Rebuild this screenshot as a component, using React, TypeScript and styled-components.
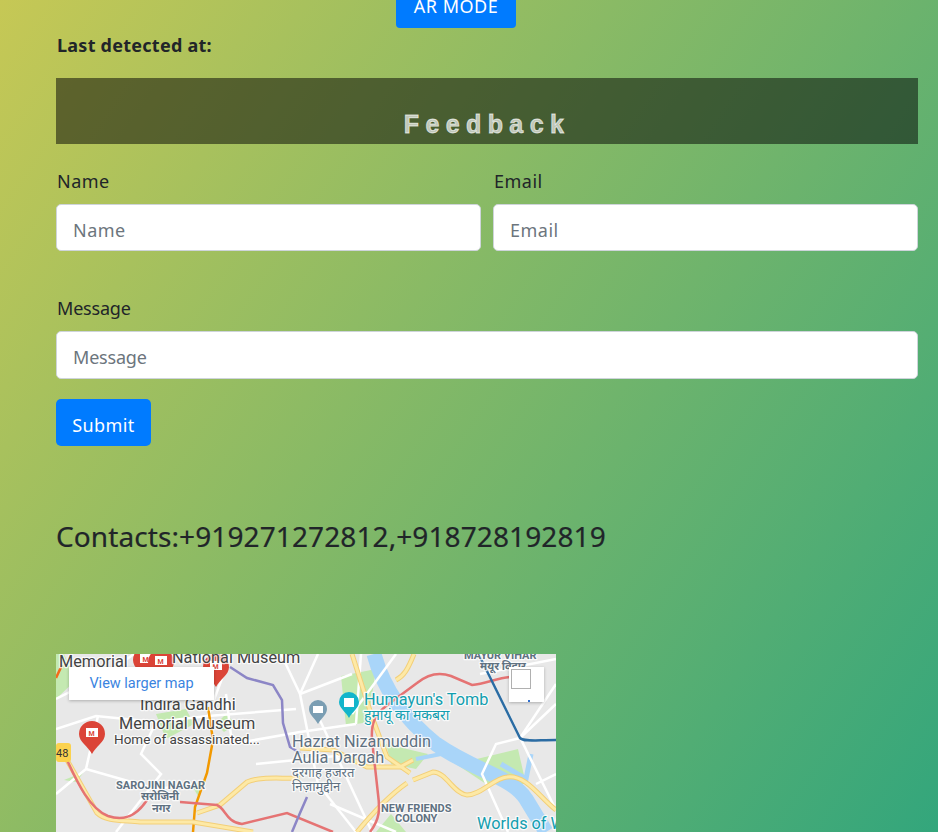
import styled, { createGlobalStyle } from 'styled-components';

const Global = createGlobalStyle`
  html, body {
    margin: 0;
    height: 832px;
    overflow: hidden;
  }
  body {
    background: linear-gradient(124deg, #c6c855 0%, #33a67c 100%);
    font-family: 'Noto Sans', 'Open Sans', sans-serif;
    color: #212529;
  }
  * { box-sizing: border-box; }
`;

const Page = styled.div`
  padding: 0 20px 0 56px;
  height: 832px;
  overflow: hidden;
`;
const ArButton = styled.button`
  display: block;
  width: 120px;
  height: 48px;
  margin: -20px 0 0 340px;
  padding: 3px 0 0;
  border: 0;
  border-radius: 4px;
  background: #007bff;
  color: #fff;
  font: 400 18px 'Noto Sans', sans-serif;
  letter-spacing: 0.5px;
`;
const Detected = styled.p`
  margin: 5px 0 20px 1px;
  height: 25px;
  font-size: 18px;
  font-weight: 700;
  line-height: 25px;
  letter-spacing: 0.25px;
`;
const Banner = styled.h2`
  margin: 0 0 24px;
  height: 66px;
  padding-top: 30px;
  background: rgba(0, 0, 0, 0.5);
  color: rgba(255, 255, 255, 0.68);
  font: 700 25px/32px 'Liberation Sans', sans-serif;
  -webkit-text-stroke: 0.8px rgba(255, 255, 255, 0.68);
  letter-spacing: 6.4px;
  text-align: center;
`;
const Row = styled.div`
  display: flex;
  gap: 12px;
  margin-bottom: 44px;
`;
const Field = styled.div`
  flex: 1;
  min-width: 0;
`;
const Label = styled.label<{ $spaced?: boolean }>`
  display: block;
  margin: 0 0 9px 1px;
  font-size: 18px;
  line-height: 27px;
  letter-spacing: ${p => (p.$spaced ? '0.5px' : '-0.2px')};
`;
const Input = styled.input<{ $spaced?: boolean; $tall?: boolean }>`
  display: block;
  width: 100%;
  height: ${p => (p.$tall ? '48px' : '47px')};
  padding: 4px 16px 0;
  border: 1px solid #ced4da;
  border-radius: 5px;
  background: #fff;
  font: 400 18px 'Noto Sans', sans-serif;
  letter-spacing: ${p => (p.$spaced ? '0.5px' : '-0.2px')};
  &::placeholder { color: #6c757d; opacity: 1; }
`;
const MessageField = styled.div`
  margin-bottom: 20px;
`;
const Submit = styled.button`
  display: block;
  width: 95px;
  height: 47px;
  padding: 4px 0 0;
  border: 0;
  border-radius: 5px;
  background: #007bff;
  color: #fff;
  font: 400 18px 'Noto Sans', sans-serif;
  letter-spacing: 0.4px;
`;
const Contacts = styled.h3`
  margin: 70px 0 98px;
  height: 40px;
  font-size: 28px;
  font-weight: 400;
  line-height: 40px;
  letter-spacing: 0.1px;
  -webkit-text-stroke: 0.2px #212529;
`;
const MapFrame = styled.div`
  position: relative;
  width: 500px;
  height: 400px;
  overflow: hidden;
  background: #e8e8e8;
`;
const LargerLink = styled.a`
  position: absolute;
  left: 13px;
  top: 13px;
  width: 145px;
  height: 33px;
  background: #fff;
  box-shadow: 0 1px 3px rgba(0, 0, 0, 0.25);
  color: #3a84df;
  font: 400 14.5px/33px Roboto, sans-serif;
  text-align: center;
`;
const ZoomCard = styled.div`
  position: absolute;
  left: 453px;
  top: 13px;
  width: 35px;
  height: 35px;
  padding: 2px;
  background: #fff;
  box-shadow: 0 1px 3px rgba(0, 0, 0, 0.25);
`;
const ZoomBox = styled.div`
  width: 20px;
  height: 20px;
  border: 1px solid #b0b0b0;
  background: #fff;
`;
const ZoomDot = styled.div`
  position: absolute;
  left: 19px;
  top: 33px;
  width: 2px;
  height: 2px;
  background: #2f6fd0;
`;
const MapSvg = styled.svg`
  display: block;
  font-family: Roboto, 'Noto Sans', sans-serif;
  text {
    paint-order: stroke;
    stroke: rgba(255, 255, 255, 0.8);
    stroke-width: 2.5px;
    stroke-linejoin: round;
  }
`;

const whiteRoads = [
  'M0 45L50 20L78 0', 'M0 75L40 62L100 68L152 62L240 55', 'M42 62L30 115L0 140', 'M100 68L85 100L105 120L60 178',
  'M30 115L100 135L140 130', 'M152 62L175 0', 'M176 90L244 78L300 70', 'M176 90L170 40', 'M225 0L244 40L262 130L300 178',
  'M244 40L296 20', 'M200 110L300 100', 'M262 0L244 40', 'M300 70L305 0', 'M0 105L11 106', 'M262 62L316 178',
  'M274 150L340 178', 'M452 178L426 120L440 90L464 84L500 50', 'M424 3L500 156', 'M464 84L500 30', 'M480 130L500 120',
  'M340 0L296 60', 'M424 20L500 5',
];
const salmonRoads = [
  'M11 106C22 130 34 155 52 162C64 166 78 166 91 146',
  'M124 148L161 151C170 155 170 168 186 170L231 159L277 178',
  'M314 178C324 165 324 155 322 140L316 86C315 70 318 62 330 52L361 29C372 20 384 18 395 22L416 31C430 30 440 24 454 23',
];
const yellowRoads = [
  'M11 106L41 159C50 168 70 166 84 168L137 168L197 178',
  'M141 159L164 151L191 128C205 122 225 125 244 124',
  'M296 0L316 63L331 103L354 119',
  'M244 94L277 96L311 113L344 113L357 106',
  'M357 126L377 118C390 118 398 140 411 141C425 141 438 124 451 123C470 120 485 145 500 156',
  'M301 178C320 155 335 140 351 129',
  'M340 26C348 22 352 15 358 0',
];
const pins: [number, number][] = [[36, 80], [90, 6], [105, 8], [160, 13]];

function MapArt() {
  return (
    <MapSvg width={500} height={178} viewBox='0 0 500 178'>
      <rect width={500} height={178} fill='#e8e8e8' />
      <g fill='#c4e9b1'>
        <path d='M0 0L8 0L20 26L0 45Z' />
        <path d='M285 22L320 15L312 68L290 72Z' />
        <path d='M100 60L130 55L138 70L110 85Z' />
        <path d='M330 90L372 100L360 115L335 110Z' />
        <path d='M400 110L462 95L470 130L430 130Z' />
        <path d='M160 70L170 60L180 70L168 78Z' />
        <path d='M8 126L28 118L20 128Z' />
        <path d='M135 130L148 128L142 142Z' />
        <path d='M335 160L350 178L320 178Z' />
      </g>
      <g fill='none' stroke='#a9d5f9'>
        <path d='M318 0C326 30 345 62 380 90C420 118 455 122 470 145L490 178' strokeWidth={15} />
        <path d='M360 105L400 97' strokeWidth={4} />
        <path d='M445 110L470 125L475 100' strokeWidth={5} />
      </g>
      <g fill='none' stroke='#fff' strokeWidth={2.5}>
        {whiteRoads.map(d => <path key={d} d={d} />)}
      </g>
      <path d='M152 53L157 86L151 119L139 153L137 178' fill='none' stroke='#f29900' strokeWidth={2.5} />
      <path d='M6 11L0 24' fill='none' stroke='#f4691a' strokeWidth={2.5} />
      <g fill='none' stroke='#f3cf78' strokeWidth={5}>
        {yellowRoads.map(d => <path key={d} d={d} />)}
      </g>
      <g fill='none' stroke='#fde9a6' strokeWidth={3}>
        {yellowRoads.map(d => <path key={d} d={d} />)}
      </g>
      <g fill='none' stroke='#e57373' strokeWidth={2.5}>
        {salmonRoads.map(d => <path key={d} d={d} />)}
      </g>
      <path d='M174 13L191 24L217 31L226 46L227 69L234 93L244 99' fill='none' stroke='#8c86c6' strokeWidth={2.5} />
      <path d='M251 143L244 159L236 178' fill='none' stroke='#8c86c6' strokeWidth={2.5} />
      <path d='M424 3L464 84C468 88 480 86 500 86' fill='none' stroke='#2b6ca3' strokeWidth={2.5} />
      <rect y={89} x={0} width={15} height={19} rx={3} fill='#fbd24e' />
      <text x={0} y={103} fontSize={11} fill='#333' style={{ strokeWidth: 0 }}>48</text>
      {pins.map(([x, y]) => (
        <g key={x}>
          <path d={`M${x} ${y - 13}a13 13 0 0 1 13 13c0 8 -9 12 -13 20c-4 -8 -13 -12 -13 -20a13 13 0 0 1 13 -13z`} fill='#db4437' />
          <rect x={x - 6} y={y - 6} width={12} height={9} fill='#fff' />
          <text x={x - 3.5} y={y + 2} fontSize={7} fontWeight={700} fill='#db4437' style={{ strokeWidth: 0 }}>M</text>
        </g>
      ))}
      <path d='M262 46a9 9 0 0 1 9 9c0 6 -6 9 -9 15c-3 -6 -9 -9 -9 -15a9 9 0 0 1 9 -9z' fill='#7b9eb3' />
      <rect x={257} y={52} width={10} height={7} fill='#fff' />
      <path d='M293 38a10 10 0 0 1 10 10c0 6 -7 10 -10 16c-3 -6 -10 -10 -10 -16a10 10 0 0 1 10 -10z' fill='#12b5cb' />
      <rect x={288} y={44} width={10} height={9} fill='#fff' />

      <g fill='#444' fontSize={16.3}>
        <text x={3} y={13}>Memorial</text>
        <text x={116} y={9}>National Museum</text>
        <text x={84} y={56}>Indira Gandhi</text>
        <text x={63} y={75}>Memorial Museum</text>
        <text x={58} y={90} fontSize={13.5}>Home of assassinated...</text>
      </g>
      <g fill='#5f7181' fontSize={16.3}>
        <text x={236} y={93}>Hazrat Nizamuddin</text>
        <text x={236} y={109}>Aulia Dargah</text>
        <text x={236} y={123} fontSize={13}>दरगाह हजरत</text>
        <text x={236} y={137} fontSize={13}>निज़ामुद्दीन</text>
      </g>
      <g fill='#5f7181' fontSize={11} fontWeight={700}>
        <text x={60} y={135}>SAROJINI NAGAR</text>
        <text x={85} y={146}>सरोजिनी</text>
        <text x={96} y={158}>नगर</text>
        <text x={325} y={158}>NEW FRIENDS</text>
        <text x={339} y={168}>COLONY</text>
        <text x={408} y={5}>MAYUR VIHAR</text>
        <text x={424} y={16}>मयूर विहार</text>
      </g>
      <g fill='#129eaf' fontSize={16.3}>
        <text x={308} y={51}>Humayun's Tomb</text>
        <text x={308} y={66} fontSize={14}>हुमायूं का मकबरा</text>
        <text x={421} y={175}>Worlds of Wonder</text>
      </g>
    </MapSvg>
  );
}

export default function App() {
  return (
    <Page>
      <Global />
      <ArButton>AR MODE</ArButton>
      <Detected>Last detected at:</Detected>
      <Banner>Feedback</Banner>
      <Row>
        <Field>
          <Label $spaced>Name</Label>
          <Input $spaced placeholder='Name' />
        </Field>
        <Field>
          <Label $spaced>Email</Label>
          <Input $spaced placeholder='Email' />
        </Field>
      </Row>
      <MessageField>
        <Label>Message</Label>
        <Input $tall placeholder='Message' />
      </MessageField>
      <Submit>Submit</Submit>
      <Contacts>Contacts:+919271272812,+918728192819</Contacts>
      <MapFrame>
        <MapArt />
        <LargerLink>View larger map</LargerLink>
        <ZoomCard>
          <ZoomBox />
          <ZoomDot />
        </ZoomCard>
      </MapFrame>
    </Page>
  );
}
